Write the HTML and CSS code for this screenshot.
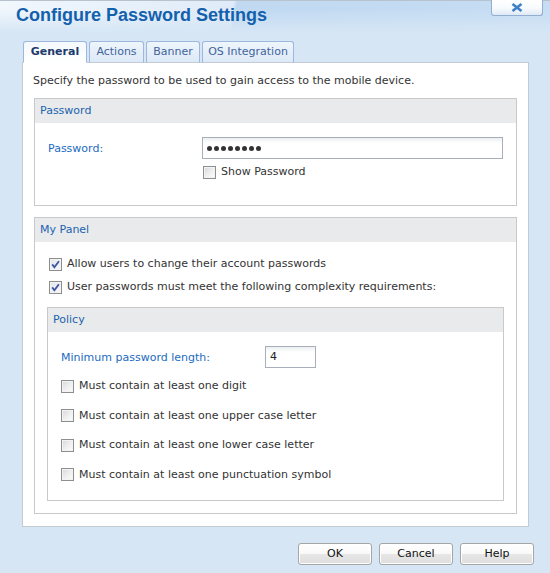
FILE: index.html
```html
<!DOCTYPE html>
<html>
<head>
<meta charset="utf-8">
<link rel="stylesheet" href="styles.css">
</head>
<body>
<div class="titlebar">
  <div class="title">Configure Password Settings</div>
  <div class="close"><svg viewBox="0 0 12 9" width="12" height="9"><path d="M1.5 1 L10.5 8 M10.5 1 L1.5 8" stroke="#3f80c6" stroke-width="2.6" stroke-linecap="butt"/></svg></div>
</div>
<div class="tabs">
  <div class="tab tab-general active">General</div>
  <div class="tab tab-actions">Actions</div>
  <div class="tab tab-banner">Banner</div>
  <div class="tab tab-os">OS Integration</div>
</div>
<div class="panel">
  <div class="intro">Specify the password to be used to gain access to the mobile device.</div>

  <div class="group group-password">
    <div class="group-head">Password</div>
    <div class="pw-grid">
      <div class="label">Password:</div>
      <div class="input pw-input"><span class="dot"></span><span class="dot"></span><span class="dot"></span><span class="dot"></span><span class="dot"></span><span class="dot"></span><span class="dot"></span><span class="dot"></span></div>
      <div></div>
      <div class="check-row show-pw"><span class="cb"></span><span>Show Password</span></div>
    </div>
  </div>

  <div class="group group-panel">
    <div class="group-head">My Panel</div>
    <div class="panel-body">
      <div class="check-row first"><span class="cb checked"><svg viewBox="0 0 11 11" width="11" height="11"><path d="M2.2 5.4 L4.4 8.2 L8.9 2.2" fill="none" stroke="#3d55a3" stroke-width="1.8"/></svg></span><span>Allow users to change their account passwords</span></div>
      <div class="check-row second"><span class="cb checked"><svg viewBox="0 0 11 11" width="11" height="11"><path d="M2.2 5.4 L4.4 8.2 L8.9 2.2" fill="none" stroke="#3d55a3" stroke-width="1.8"/></svg></span><span>User passwords must meet the following complexity requirements:</span></div>

      <div class="group group-policy">
        <div class="group-head">Policy</div>
        <div class="policy-body">
          <div class="len-row">
            <div class="label len-label">Minimum password length:</div>
            <div class="input len-input">4</div>
          </div>
          <div class="check-row policy-row first-policy"><span class="cb"></span><span>Must contain at least one digit</span></div>
          <div class="check-row policy-row"><span class="cb"></span><span>Must contain at least one upper case letter</span></div>
          <div class="check-row policy-row"><span class="cb"></span><span>Must contain at least one lower case letter</span></div>
          <div class="check-row policy-row"><span class="cb"></span><span>Must contain at least one punctuation symbol</span></div>
        </div>
      </div>
    </div>
  </div>
</div>
<div class="buttons">
  <div class="btn">OK</div>
  <div class="btn">Cancel</div>
  <div class="btn">Help</div>
</div>
</body>
</html>
```
FILE: styles.css
```css
* { box-sizing: border-box; }
html, body { margin: 0; padding: 0; }
body {
  width: 550px;
  height: 573px;
  overflow: hidden;
  background: #d6e6f5;
  font-family: "DejaVu Sans", Verdana, sans-serif;
  font-size: 11px;
  color: #333;
}
.titlebar {
  height: 41px;
  border-top: 1px solid #b7c2cd;
  display: flex;
  justify-content: space-between;
  align-items: flex-start;
  background:
    linear-gradient(to bottom, rgba(214,230,245,0) 8px, #d6e6f5 32px),
    linear-gradient(100deg, #f1f7fd 0%, #dfebf8 42%, #c0d9f1 42.6%, #c6ddf3 100%);
}
.title {
  font-family: "Liberation Sans", Arial, sans-serif;
  font-weight: bold;
  font-size: 18px;
  line-height: 22px;
  color: #1360ad;
  padding: 3px 0 0 16px;
}
.close {
  width: 52px;
  height: 16px;
  margin-right: 7px;
  margin-top: -1px;
  border: 1px solid #93aed0;
  border-top: none;
  border-radius: 0 0 3px 3px;
  background: linear-gradient(to bottom, #ffffff 0%, #f7fafd 55%, #dfe9f5 100%);
  display: flex;
  align-items: center;
  justify-content: center;
}
.tabs {
  position: relative;
  z-index: 1;
  display: flex;
  gap: 2px;
  margin-left: 23px;
  height: 22px;
  margin-bottom: -1px;
}
.tab {
  height: 22px;
  border: 1px solid #9db8dc;
  border-bottom: 1px solid #c3cad3;
  border-radius: 3px 3px 0 0;
  background: linear-gradient(to bottom, #eef5fc 0%, #dde9f7 100%);
  color: #41639a;
  text-align: center;
  line-height: 20px;
  padding-top: 0;
}
.tab.active {
  background: linear-gradient(to bottom, #f4f8fc 0%, #ffffff 100%);
  border-bottom: 1px solid #ffffff;
  color: #1d3a6c;
  font-weight: bold;
}
.tab-general { width: 64px; }
.tab-actions { width: 55px; }
.tab-banner { width: 54px; }
.tab-os { width: 92px; }

.panel {
  margin-left: 22px;
  width: 507px;
  background: #fff;
  border: 1px solid #c3cad3;
  padding: 10px 11px 12px 11px;
}
.intro {
  line-height: 16px;
  padding-left: 0;
  margin-left: -1px;
}
.group {
  border: 1px solid #c9c9c9;
  background: #fff;
}
.group-head {
  height: 24px;
  line-height: 24px;
  background: #e9eaeb;
  color: #2063af;
  padding-left: 5px;
}
.label { color: #1b6bbf; }

.group-password { margin-top: 9px; }
.pw-grid {
  display: grid;
  grid-template-columns: 154px 301px;
  padding: 14px 0 25px 13px;
  align-items: center;
}
.input {
  height: 22px;
  border: 1px solid #a8afba;
  background: linear-gradient(to bottom, #eceef1 0%, #ffffff 5px, #ffffff 100%);
}
.pw-input {
  display: flex;
  align-items: center;
  gap: 2px;
  padding-left: 4px;
}
.dot {
  width: 5px;
  height: 5px;
  border-radius: 50%;
  background: #333;
}
.check-row {
  display: flex;
  align-items: center;
  gap: 5px;
  height: 16px;
  line-height: 16px;
}
.show-pw { margin-top: 5px; margin-left: 1px; }
.cb {
  flex: none;
  width: 13px;
  height: 13px;
  border: 1px solid #8d8e8f;
  background: linear-gradient(135deg, #d6d6d6 0%, #eeeeee 50%, #fdfdfd 100%);
  box-shadow: inset 0 0 0 1px #f3f3f3;
  display: flex;
  align-items: center;
  justify-content: center;
}
.cb.checked {
  background: linear-gradient(135deg, #e4e6ea 0%, #f6f7f8 100%);
}
.cb svg { display: block; }

.group-panel { margin-top: 11px; }
.panel-body { padding: 0 12px 12px 12px; }
.panel-body > .check-row { padding-left: 2px; }
.check-row.first { margin-top: 14px; }
.check-row.second { margin-top: 7px; }
.group-policy { margin-top: 12px; }
.policy-body { padding: 14px 13px 17px 13px; }
.len-row {
  display: flex;
  align-items: center;
  height: 22px;
}
.len-label { width: 204px; }
.len-input {
  width: 51px;
  padding-left: 4px;
  line-height: 20px;
  color: #222;
}
.policy-row { margin-top: 13.5px; }
.policy-row.first-policy { margin-top: 10px; }

.buttons {
  display: flex;
  justify-content: flex-end;
  gap: 7px;
  padding-right: 16px;
  margin-top: 16px;
}
.btn {
  width: 74px;
  height: 22px;
  border: 1px solid #a5a5a5;
  border-radius: 3px;
  background: linear-gradient(to bottom, #ffffff 0%, #f9f9f9 48%, #e6e6e6 52%, #dedede 100%);
  box-shadow: inset 0 0 0 1px #ffffff;
  text-align: center;
  line-height: 20px;
  color: #111;
}
```
